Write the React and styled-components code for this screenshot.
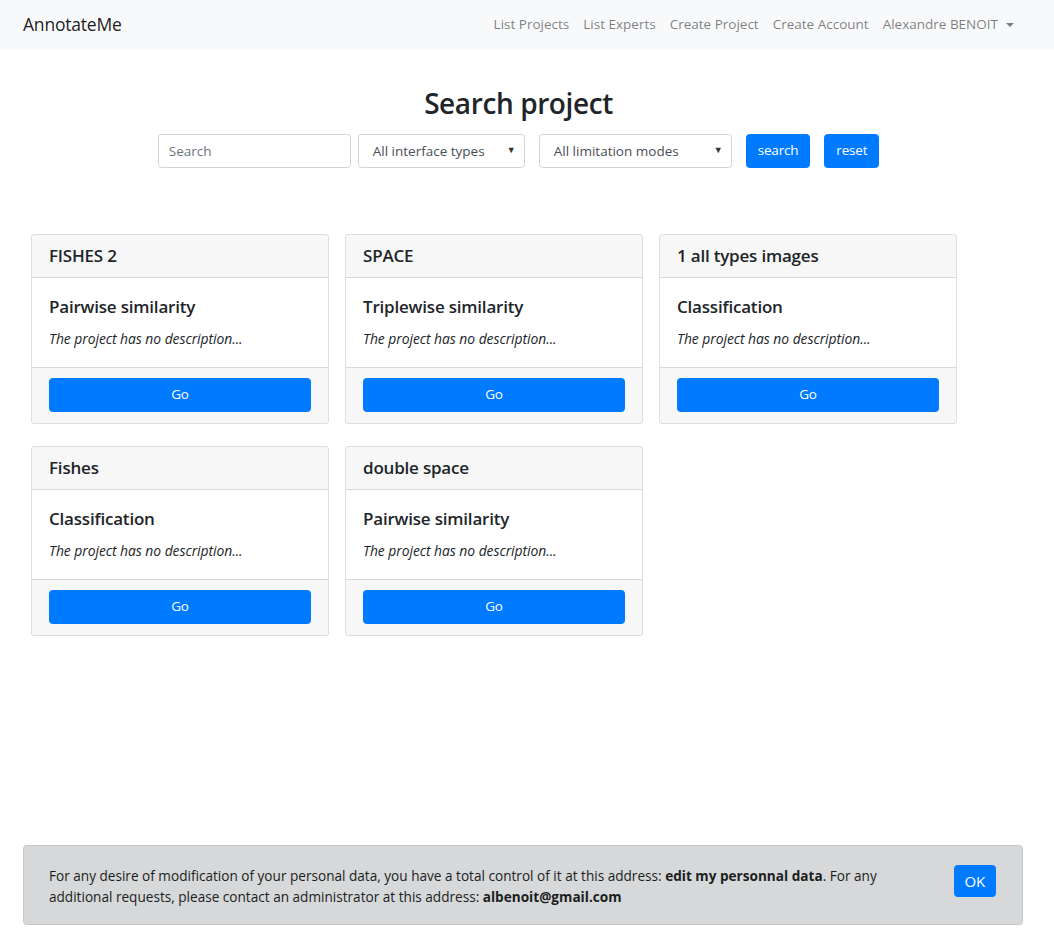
import React from "react";
import styled, { createGlobalStyle } from "styled-components";

const GlobalStyle = createGlobalStyle`
  html, body { margin: 0; padding: 0; background: #fff; }
  body {
    font-family: "Open Sans", "Noto Sans", "Liberation Sans", sans-serif;
    font-size: 14px;
    line-height: 1.5;
    color: #212529;
  }
  * { box-sizing: border-box; }
`;

const Page = styled.div`
  min-height: 100vh;
  display: flex;
  flex-direction: column;
`;

const Navbar = styled.nav`
  height: 49px;
  background: #f8f9fa;
  display: flex;
  align-items: center;
  justify-content: space-between;
  padding: 0 33px 0 23px;
`;

const Brand = styled.a`
  font-size: 17.5px;
  color: rgba(0, 0, 0, 0.9);
  text-decoration: none;
  letter-spacing: -0.2px;
`;

const NavLinks = styled.ul`
  display: flex;
  list-style: none;
  margin: 0;
  padding: 0;
`;

const NavLink = styled.li`
  padding: 0 7px;
  font-size: 13.5px;
  color: rgba(0, 0, 0, 0.5);
  display: flex;
  align-items: center;
`;

const Caret = styled.span`
  display: inline-block;
  margin-left: 8px;
  width: 0;
  height: 0;
  border-top: 4.5px solid rgba(0, 0, 0, 0.5);
  border-left: 4px solid transparent;
  border-right: 4px solid transparent;
`;

const SearchSection = styled.section`
  width: 1037px;
  display: flex;
  flex-direction: column;
  align-items: center;
  padding-top: 38px;
`;

const Title = styled.h2`
  margin: 0;
  font-size: 28px;
  font-weight: 600;
  line-height: 1.2;
  letter-spacing: -0.4px;
  color: #212529;
`;

const Form = styled.form`
  margin-top: 13px;
  display: flex;
  align-items: center;
`;

const Input = styled.input`
  width: ${(p) => p.$w}px;
  height: 34px;
  padding: 0 10px;
  border: 1px solid #ced4da;
  border-radius: 3.5px;
  font-family: inherit;
  font-size: 13.5px;
  color: #495057;
  margin-right: 7px;
  &::placeholder { color: #6c757d; }
`;

const SelectBox = styled.div`
  width: ${(p) => p.$w}px;
  height: 34px;
  border: 1px solid #ced4da;
  border-radius: 3.5px;
  display: flex;
  align-items: center;
  justify-content: space-between;
  padding: 1px 8px 0 14px;
  color: #495057;
  font-size: 13.5px;
  margin-right: 14px;
  background: #fff;
`;

const SelectArrow = styled.span`
  font-size: 9px;
  color: #333;
  margin-top: -3px;
`;

const Button = styled.button`
  height: ${(p) => p.$h || 34}px;
  padding: 0 ${(p) => p.$px || 11}px;
  background: #007bff;
  color: #fff;
  border: 1px solid #007bff;
  border-radius: 3.5px;
  font-family: inherit;
  font-size: ${(p) => p.$fs || 13.5}px;
  letter-spacing: -0.2px;
  line-height: 1;
  cursor: pointer;
  margin-right: ${(p) => p.$mr || 0}px;
  width: ${(p) => (p.$block ? "100%" : "auto")};
`;

const Grid = styled.div`
  margin-top: 66px;
  padding-left: 31px;
  display: grid;
  grid-template-columns: repeat(3, 298px);
  column-gap: 16px;
  row-gap: 22px;
`;

const Card = styled.div`
  border: 1px solid rgba(0, 0, 0, 0.125);
  border-radius: 3.5px;
  overflow: hidden;
  background: #fff;
`;

const CardHeader = styled.div`
  background: rgba(0, 0, 0, 0.033);
  border-bottom: 1px solid rgba(0, 0, 0, 0.125);
  padding: 10px 17px 11px;
`;

const CardTitle = styled.h5`
  margin: 0;
  font-size: 17px;
  font-weight: 600;
  line-height: 21px;
  letter-spacing: -0.2px;
  color: #212529;
`;

const CardBody = styled.div`
  padding: 18px 17px 18px;
`;

const SubTitle = styled.h5`
  margin: 0 0 11px;
  font-size: 17px;
  font-weight: 600;
  line-height: 21px;
  letter-spacing: -0.2px;
  color: #212529;
`;

const Desc = styled.p`
  margin: 0;
  font-size: 13.9px;
  font-style: italic;
  line-height: 21px;
  letter-spacing: -0.05px;
  color: #212529;
`;

const CardFooter = styled.div`
  background: rgba(0, 0, 0, 0.033);
  border-top: 1px solid rgba(0, 0, 0, 0.125);
  padding: 10.5px 17px;
`;

const Alert = styled.div`
  margin: auto 31px 11px 23px;
  padding: 19px 26px 17px 25px;
  background: #d6d8d9;
  border: 1px solid #c6c8ca;
  border-radius: 3.5px;
  color: #1b1e21;
  display: flex;
  align-items: flex-start;
  justify-content: space-between;
`;

const AlertText = styled.p`
  margin: 0;
  max-width: 860px;
  font-size: 13.6px;
  line-height: 21px;
`;

const projects = [
  { name: "FISHES 2", type: "Pairwise similarity" },
  { name: "SPACE", type: "Triplewise similarity" },
  { name: "1 all types images", type: "Classification" },
  { name: "Fishes", type: "Classification" },
  { name: "double space", type: "Pairwise similarity" },
];

export default function App() {
  return (
    <>
      <GlobalStyle />
      <Page>
        <Navbar>
          <Brand href="#">AnnotateMe</Brand>
          <NavLinks>
            <NavLink>List Projects</NavLink>
            <NavLink>List Experts</NavLink>
            <NavLink>Create Project</NavLink>
            <NavLink>Create Account</NavLink>
            <NavLink>
              Alexandre BENOIT
              <Caret />
            </NavLink>
          </NavLinks>
        </Navbar>

        <SearchSection>
          <Title>Search project</Title>
          <Form onSubmit={(e) => e.preventDefault()}>
            <Input $w={193} placeholder="Search" />
            <SelectBox $w={167}>
              <span>All interface types</span>
              <SelectArrow>▼</SelectArrow>
            </SelectBox>
            <SelectBox $w={193}>
              <span>All limitation modes</span>
              <SelectArrow>▼</SelectArrow>
            </SelectBox>
            <Button type="submit" $mr={14}>search</Button>
            <Button type="button">reset</Button>
          </Form>
        </SearchSection>

        <Grid>
          {projects.map((p) => (
            <Card key={p.name}>
              <CardHeader>
                <CardTitle>{p.name}</CardTitle>
              </CardHeader>
              <CardBody>
                <SubTitle>{p.type}</SubTitle>
                <Desc>The project has no description...</Desc>
              </CardBody>
              <CardFooter>
                <Button $block>Go</Button>
              </CardFooter>
            </Card>
          ))}
        </Grid>

        <Alert>
          <AlertText>
            For any desire of modification of your personal data, you have a
            total control of it at this address: <b>edit my personnal data</b>.
            For any additional requests, please contact an administrator at this
            address: <b>albenoit@gmail.com</b>
          </AlertText>
          <Button $h={32} $fs={15} $px={10}>OK</Button>
        </Alert>
      </Page>
    </>
  );
}
